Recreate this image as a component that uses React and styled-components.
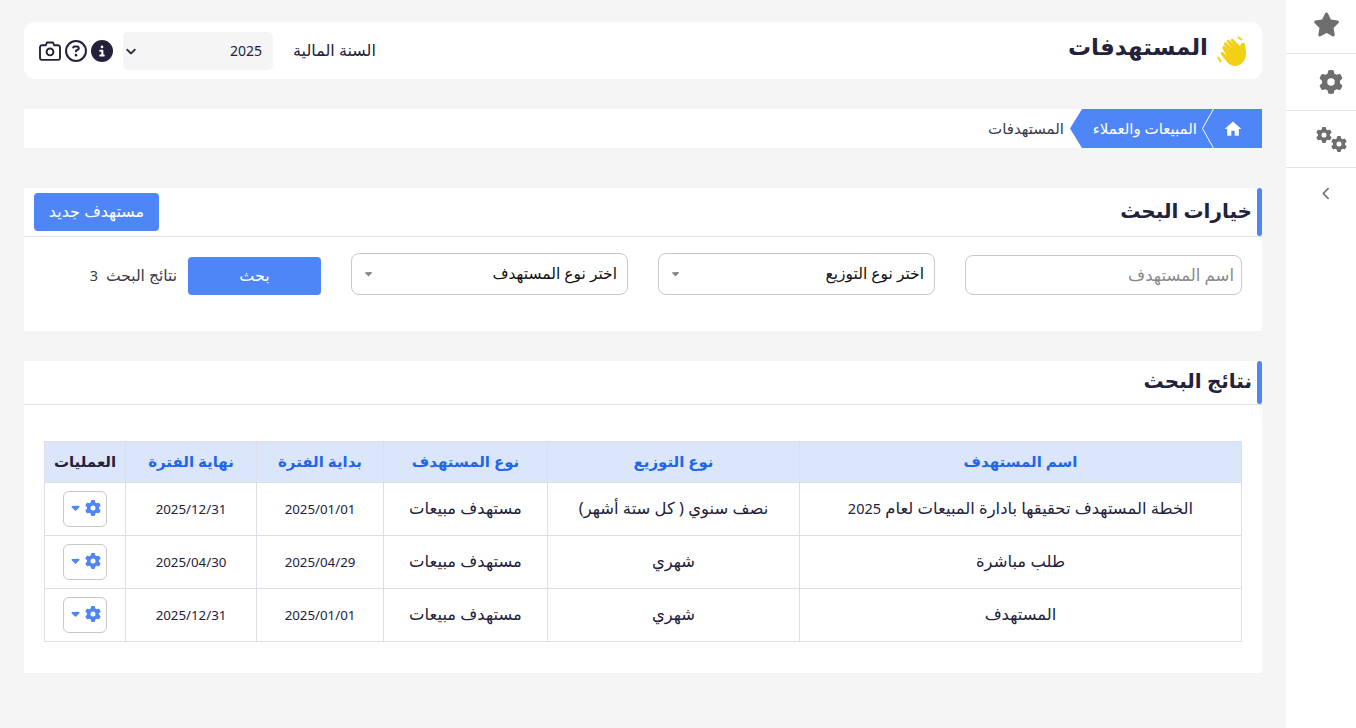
import React from "react";
import styled, { createGlobalStyle } from "styled-components";
import { FaStar, FaGear, FaCircleInfo, FaRegCircleQuestion, FaChevronLeft, FaChevronDown, FaCaretDown } from "react-icons/fa6";
import { MdHome } from "react-icons/md";

const FONT = `"Noto Sans", "DejaVu Sans", sans-serif`;

const Global = createGlobalStyle`
  * { box-sizing: border-box; }
  html, body { margin: 0; padding: 0; height: 100%; }
  body { background: #f5f5f5; font-family: ${FONT}; color: #23223a; overflow: hidden; }
`;

const Shell = styled.div`
  direction: rtl;
  display: flex;
  width: 1356px;
  height: 728px;
`;
const Sidebar = styled.aside`
  width: 70px;
  flex: none;
  background: #fff;
  display: flex;
  flex-direction: column;
`;
const SideItem = styled.div`
  height: ${(p) => p.$h}px;
  display: flex;
  align-items: center;
  justify-content: center;
  padding-left: ${(p) => p.$shift || 0}px;
  padding-bottom: ${(p) => p.$lift || 0}px;
  color: #6e6e6e;
  font-size: ${(p) => p.$size}px;
  border-bottom: ${(p) => (p.$plain ? "none" : "1px solid #e4e4e4")};
`;
const Main = styled.main`
  flex: 1;
  min-width: 0;
  padding: 22px 24px 0;
  display: flex;
  flex-direction: column;
`;
const TopCard = styled.header`
  height: 57px;
  background: #fff;
  border-radius: 11px;
  display: flex;
  align-items: center;
  justify-content: space-between;
  padding: 0 12px 0 15px;
`;
const TitleWrap = styled.div`
  display: flex;
  align-items: center;
  gap: 8px;
`;
const PageTitle = styled.h1`
  margin: 0 0 10px;
  font-size: 23px;
  font-weight: 700;
  color: #23223a;
`;
const TopTools = styled.div`
  display: flex;
  align-items: center;
`;
const YearLabel = styled.span`
  font-size: 16px;
  margin-left: 20px;
  padding-bottom: 1px;
  color: #23223a;
`;
const YearSelect = styled.div`
  width: 150px;
  height: 38px;
  background: #f5f5f5;
  border-radius: 5px;
  display: flex;
  align-items: center;
  justify-content: space-between;
  padding: 0 11px 0 3px;
  font-size: 14px;
  margin-left: 10px;
`;
const ToolIcons = styled.div`
  display: flex;
  align-items: center;
  gap: 4px;
  color: #23223a;
  font-size: 22px;
`;
const Crumbs = styled.nav`
  margin-top: 30px;
  height: 39px;
  background: #fff;
  display: flex;
  align-items: center;
`;
const BlueTrail = styled.div`
  position: relative;
  width: 192px;
  height: 39px;
  flex: none;
  background: #4f86f7;
  color: #fff;
  display: flex;
  align-items: center;
  clip-path: polygon(100% 0, 100% 100%, 12px 100%, 0 50%, 12px 0);
`;
const HomeCrumb = styled.div`
  width: 60px;
  flex: none;
  display: flex;
  justify-content: center;
  padding-left: 2px;
  font-size: 20px;
`;
const CrumbDivider = styled.svg`
  position: absolute;
  right: 47px;
  top: 0;
`;
const SectionCrumb = styled.span`
  font-size: 15px;
  color: #fff;
  margin-right: 5px;
  padding-bottom: 1px;
  white-space: nowrap;
`;
const CurrentCrumb = styled.span`
  font-size: 15px;
  color: #3a3a46;
  margin-right: 6px;
  padding-bottom: 1px;
`;
const Card = styled.section`
  background: #fff;
  margin-top: ${(p) => p.$mt}px;
  height: ${(p) => p.$h}px;
`;
const CardHead = styled.div`
  position: relative;
  height: ${(p) => p.$h}px;
  border-bottom: 1px solid #e4e4e4;
  display: flex;
  align-items: center;
  justify-content: space-between;
  padding: 0 10px;
  &::before {
    content: "";
    position: absolute;
    top: 0;
    bottom: 0;
    right: 0;
    width: 5px;
    border-radius: 3px;
    background: #4f86f7;
  }
`;
const CardTitle = styled.h2`
  margin: 0 0 4px;
  font-size: 20px;
  font-weight: 700;
  color: #23223a;
`;
const PrimaryButton = styled.button`
  font-family: ${FONT};
  direction: rtl;
  border: 0;
  background: #4f86f7;
  color: #fff;
  font-size: 16px;
  border-radius: 4px;
  height: ${(p) => p.$h}px;
  width: ${(p) => p.$w}px;
  padding: 0 0 3px;
`;
const Filters = styled.div`
  display: grid;
  grid-template-columns: 277px 277px 277px auto;
  column-gap: 30px;
  align-items: start;
  padding: 16px 20px 0;
`;
const TextField = styled.input`
  font-family: ${FONT};
  direction: rtl;
  height: 40px;
  margin-top: 2px;
  width: 100%;
  border: 1px solid #c8c8c8;
  border-radius: 8px;
  padding: 0 7px 1px;
  font-size: 16.5px;
  outline: none;
  &::placeholder { color: #8a8a8a; opacity: 1; }
`;
const Combo = styled.div`
  height: 42px;
  border: 1px solid #c8c8c8;
  border-radius: 8px;
  display: flex;
  align-items: center;
  justify-content: space-between;
  padding: 0 10px 3px 11px;
  font-size: 15.5px;
  color: #111;
`;
const ComboArrow = styled.span`
  color: #888;
  font-size: 11px;
  display: flex;
  padding-top: 1px;
`;
const ResultAction = styled.div`
  display: flex;
  align-items: center;
  gap: 11px;
  margin-top: 4px;
`;
const ResultCount = styled.span`
  font-size: 15.5px;
  color: #3a3a46;
  white-space: pre;
  padding-bottom: 3px;
`;
const Digits = styled.span`
  font-size: 14.5px;
`;
const TableWrap = styled.div`
  padding: 36px 20px 0 21px;
`;
const Table = styled.table`
  width: 100%;
  border-collapse: collapse;
  table-layout: fixed;
  color: #23223a;
`;
const Th = styled.th`
  height: 41px;
  background: #dce6fb;
  border: 1px solid #dcdfe8;
  color: ${(p) => (p.$dark ? "#23223a" : "#1f66ee")};
  font-size: 15px;
  font-weight: 700;
  padding: 0 0 3px;
`;
const Td = styled.td`
  height: 53px;
  border: 1px solid #dcdfe8;
  text-align: center;
  font-size: ${(p) => (p.$num ? "13.3px" : "16.4px")};
  padding: 0 0 ${(p) => (p.$num ? 1 : 3)}px;
`;
const ActionButton = styled.button`
  width: 44px;
  height: 36px;
  border: 1px solid #c8c8c8;
  border-radius: 6px;
  background: #fff;
  color: #4f86f7;
  display: inline-flex;
  align-items: center;
  justify-content: center;
  gap: 3px;
  font-size: 16px;
  padding: 0 0 2px;
  vertical-align: middle;
`;

const Hand = () => (
  <svg width="34" height="32" viewBox="0 0 34 32" aria-hidden="true" style={{ flex: "none" }}>
    <path fill="#f2d014" d="M9 11 L14 16 L8 9.5 C7 8 9 6.4 10.4 7.8 L16.5 13.8 L11 7 C10 5.5 12 3.8 13.4 5.2 L20 11.6 L15 6 C14 4.5 16 3 17.4 4.4 L24 11 L25.5 8.5 C26.5 7 29 7.5 29 9.6 L30 17 C30.6 23 27 30 20 31 C14 31.5 11 27 9.5 25 L5 19.5 C4 18 5.8 16 7.3 17.4 L11 21 L6.6 14 C5.6 12.4 7.6 10 9 11 Z" />
    <path fill="none" stroke="#f2d014" strokeWidth="2" d="M2 22 L5 27 M22 2 L26 5" />
  </svg>
);
const CameraIcon = () => (
  <svg width="22" height="20" viewBox="0 0 23 21" fill="none" stroke="#23223a" strokeWidth="2" aria-hidden="true">
    <path d="M3 4.5h4l1.5-3h6l1.5 3h4a2 2 0 0 1 2 1.8V18a2 2 0 0 1-2 1.8H3A2 2 0 0 1 1 18V6.3a2 2 0 0 1 2-1.8z" />
    <circle cx="11.5" cy="11.5" r="3.6" />
  </svg>
);
const TwoGears = () => (
  <svg width="31" height="25" viewBox="0 0 31 25" fill="currentColor" aria-hidden="true">
    <FaGear x="0" y="0" size={16} />
    <FaGear x="15" y="9" size={16} />
  </svg>
);

const rows = [
  [<>الخطة المستهدف تحقيقها بادارة المبيعات لعام <Digits>2025</Digits></>, "نصف سنوي ( كل ستة أشهر)", "مستهدف مبيعات", "2025/01/01", "2025/12/31"],
  ["طلب مباشرة", "شهري", "مستهدف مبيعات", "2025/04/29", "2025/04/30"],
  ["المستهدف", "شهري", "مستهدف مبيعات", "2025/01/01", "2025/12/31"],
];
const heads = ["اسم المستهدف", "نوع التوزيع", "نوع المستهدف", "بداية الفترة", "نهاية الفترة"];
const widths = [442, 252, 164, 127, 131, 81];

export default function App() {
  return (
    <Shell>
      <Global />
      <Sidebar>
        <SideItem $h={54} $size={27} $shift={11} $lift={4}><FaStar /></SideItem>
        <SideItem $h={57} $size={24} $shift={20}><FaGear /></SideItem>
        <SideItem $h={57} $size={24} $shift={20}><TwoGears /></SideItem>
        <SideItem $h={50} $size={13} $shift={10} $plain><FaChevronLeft /></SideItem>
      </Sidebar>
      <Main>
        <TopCard>
          <TitleWrap><Hand /><PageTitle>المستهدفات</PageTitle></TitleWrap>
          <TopTools>
            <YearLabel>السنة المالية</YearLabel>
            <YearSelect><span>2025</span><FaChevronDown size={10} stroke="currentColor" strokeWidth={40} /></YearSelect>
            <ToolIcons><FaCircleInfo /><FaRegCircleQuestion /><CameraIcon /></ToolIcons>
          </TopTools>
        </TopCard>
        <Crumbs>
          <BlueTrail>
            <HomeCrumb><MdHome /></HomeCrumb>
            <CrumbDivider width="14" height="39" viewBox="0 0 14 39" fill="none" stroke="#fff" strokeWidth="1" aria-hidden="true">
              <path d="M13 -1 L1.5 19.5 L13 40" />
            </CrumbDivider>
            <SectionCrumb>المبيعات والعملاء</SectionCrumb>
          </BlueTrail>
          <CurrentCrumb>المستهدفات</CurrentCrumb>
        </Crumbs>
        <Card $mt={40} $h={143}>
          <CardHead $h={49}>
            <CardTitle>خيارات البحث</CardTitle>
            <PrimaryButton $w={125} $h={38}>مستهدف جديد</PrimaryButton>
          </CardHead>
          <Filters>
            <TextField placeholder="اسم المستهدف" />
            <Combo><span>اختر نوع التوزيع</span><ComboArrow><FaCaretDown /></ComboArrow></Combo>
            <Combo><span>اختر نوع المستهدف</span><ComboArrow><FaCaretDown /></ComboArrow></Combo>
            <ResultAction>
              <PrimaryButton $w={133} $h={38}>بحث</PrimaryButton>
              <ResultCount>نتائج البحث  <Digits>3</Digits></ResultCount>
            </ResultAction>
          </Filters>
        </Card>
        <Card $mt={30} $h={312}>
          <CardHead $h={44}><CardTitle>نتائج البحث</CardTitle></CardHead>
          <TableWrap>
            <Table>
              <colgroup>{widths.map((w) => <col key={w} style={{ width: w }} />)}</colgroup>
              <thead>
                <tr>
                  {heads.map((h) => <Th key={h}>{h}</Th>)}
                  <Th $dark>العمليات</Th>
                </tr>
              </thead>
              <tbody>
                {rows.map((r, i) => (
                  <tr key={i}>
                    {r.map((c, j) => <Td key={j} $num={j > 2}>{c}</Td>)}
                    <Td $num><ActionButton><FaGear /><FaCaretDown size={13} /></ActionButton></Td>
                  </tr>
                ))}
              </tbody>
            </Table>
          </TableWrap>
        </Card>
      </Main>
    </Shell>
  );
}
